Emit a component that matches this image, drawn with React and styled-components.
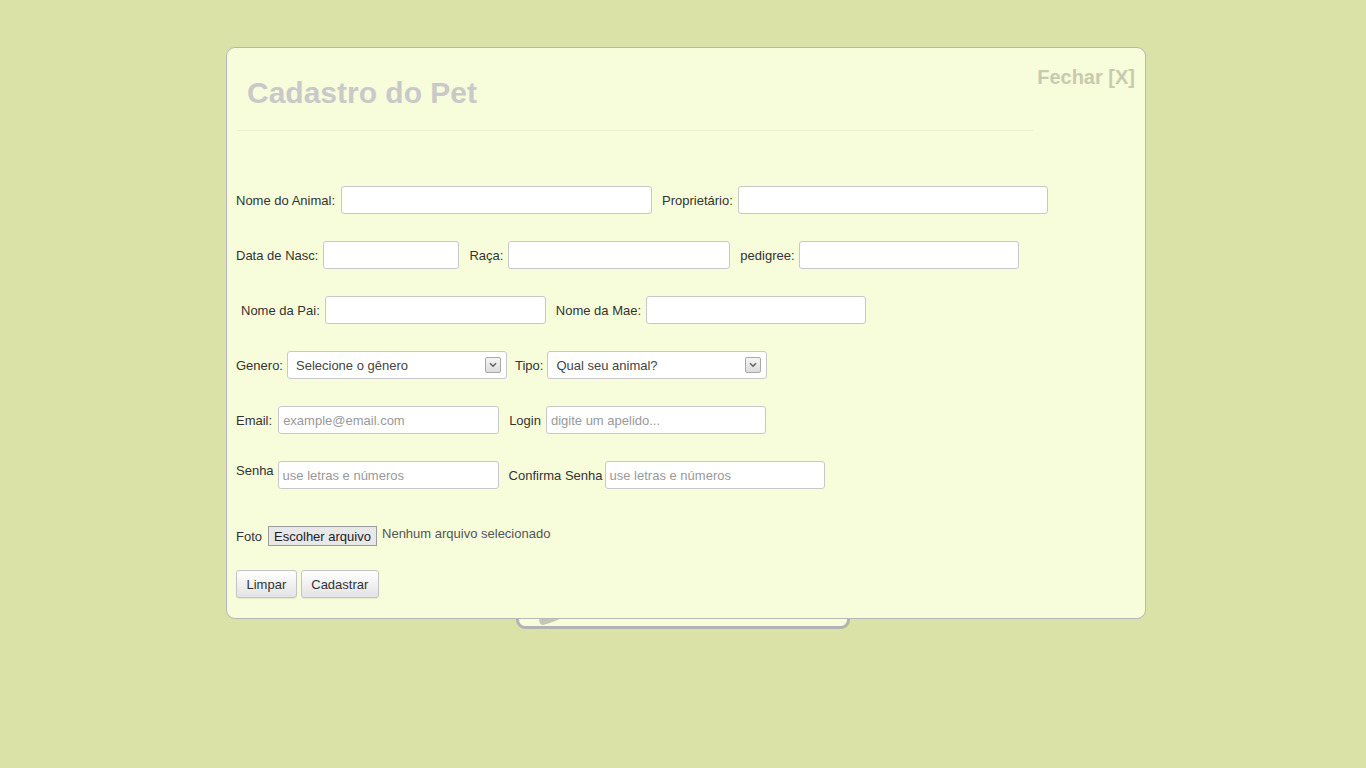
import React from 'react';
import styled, { createGlobalStyle } from 'styled-components';

const GlobalStyle = createGlobalStyle`
  html, body {
    margin: 0;
    padding: 0;
    background: #dae2a8;
    font-family: "Liberation Sans", Arial, sans-serif;
  }
  body {
    min-height: 768px;
  }
`;

const Page = styled('div')`
  position: relative;
  width: 1366px;
  height: 768px;
  overflow: hidden;
`;

const BackCard = styled('div')`
  position: relative;
  width: 328px;
  height: 294px;
  margin: 329px auto 0;
  background: #f7fcda;
  border: 3px solid #b3b3b3;
  border-radius: 9px;
`;

const Wedge = styled('svg')`
  position: absolute;
  left: 18px;
  bottom: 0;
`;

const Modal = styled('div')`
  position: absolute;
  top: 47px;
  left: 226px;
  width: 900px;
  padding: 0 9px 20px;
  background: #f7fcda;
  border: 1px solid #b7b7b7;
  border-radius: 9px;
  color: #333;
`;

const Close = styled('a')`
  position: absolute;
  top: 17px;
  right: 10px;
  font-size: 20px;
  line-height: 24px;
  font-weight: bold;
  color: #c8cab0;
  text-decoration: none;
  cursor: pointer;
`;

const Title = styled('h1')`
  margin: 27px 0 0 11px;
  font-size: 30px;
  line-height: 36px;
  font-weight: bold;
  color: #c9c9c9;
`;

const Rule = styled('hr')`
  width: 796px;
  margin: 19px 0 0 1px;
  border: 0;
  border-top: 1px solid #ecefd8;
  height: 0;
`;

const Form = styled('form')`
  display: flex;
  flex-direction: column;
  padding-top: 55px;
`;

const Row = styled('div')`
  display: flex;
  align-items: center;
  height: ${(p) => p.h || 28}px;
  margin-bottom: ${(p) => (p.mb === undefined ? 27 : p.mb)}px;
`;

const Label = styled('label')`
  font-size: 13px;
  line-height: 16px;
  color: #333;
  margin-left: ${(p) => p.indent || 0}px;
  margin-right: ${(p) => (p.gap === undefined ? 5 : p.gap)}px;
  align-self: ${(p) => (p.top ? 'flex-start' : 'center')};
  margin-top: 2px;
  white-space: nowrap;
`;

const Input = styled('input')`
  box-sizing: border-box;
  width: ${(p) => p.w}px;
  height: 28px;
  margin: 0 ${(p) => (p.after === undefined ? 10 : p.after)}px 0 0;
  padding: 0 4px;
  background: #fff;
  border: 1px solid #c8c8c8;
  border-radius: 3px;
  font-family: "Liberation Sans", Arial, sans-serif;
  font-size: 13px;
  color: #333;
  outline: none;

  &::placeholder {
    color: #999;
  }
`;

const SelectBox = styled('div')`
  position: relative;
  box-sizing: border-box;
  width: ${(p) => p.w}px;
  height: 28px;
  margin-right: ${(p) => (p.after === undefined ? 10 : p.after)}px;
  background: #fff;
  border: 1px solid #c8c8c8;
  border-radius: 3px;
`;

const Select = styled('select')`
  appearance: none;
  -webkit-appearance: none;
  width: 100%;
  height: 100%;
  padding: 0 24px 0 8px;
  border: 0;
  background: transparent;
  font-family: "Liberation Sans", Arial, sans-serif;
  font-size: 13px;
  color: #444;
  outline: none;
`;

const Arrow = styled('span')`
  position: absolute;
  top: 5px;
  right: 5px;
  box-sizing: border-box;
  width: 16px;
  height: 16px;
  display: flex;
  align-items: center;
  justify-content: center;
  border: 1px solid #a9a9a9;
  border-radius: 2px;
  background: linear-gradient(#f6f6f6, #dcdcdc);
  pointer-events: none;
`;

const FileButton = styled('button')`
  box-sizing: border-box;
  height: 20px;
  width: 109px;
  margin-right: 5px;
  padding: 0;
  border: 1px solid #9c9c9c;
  background: #e8e8e8;
  font-family: "Liberation Sans", Arial, sans-serif;
  font-size: 13px;
  color: #222;
  align-self: center;
`;

const FileStatus = styled('span')`
  font-size: 13px;
  color: #555;
  align-self: flex-start;
`;

const Button = styled('button')`
  box-sizing: border-box;
  height: 28px;
  padding: 0 9.5px;
  margin-right: 4px;
  border: 1px solid #c4c4c4;
  border-radius: 3px;
  background: linear-gradient(#ffffff, #e3e3e3);
  box-shadow: 0 1px 1px rgba(0, 0, 0, 0.08);
  font-family: "Liberation Sans", Arial, sans-serif;
  font-size: 13px;
  color: #333;
  cursor: pointer;
`;

function Chevron() {
  return (
    <svg width="8" height="6" viewBox="0 0 8 6">
      <path d="M1 1.2 L4 4.2 L7 1.2" fill="none" stroke="#666" strokeWidth="1.6" />
    </svg>
  );
}

function Dropdown({ w, after, children }) {
  return (
    <SelectBox w={w} after={after}>
      <Select defaultValue="">{children}</Select>
      <Arrow>
        <Chevron />
      </Arrow>
    </SelectBox>
  );
}

export default function App() {
  return (
    <>
      <GlobalStyle />
      <Page>
        <BackCard>
          <Wedge width="32" height="10" viewBox="0 0 32 10">
            <path d="M2 0 L30 0 C22 3 14 7 6 9 C3 9 2 6 2 0 Z" fill="#c4c7b4" />
          </Wedge>
        </BackCard>

        <Modal>
          <Close>Fechar [X]</Close>
          <Title>Cadastro do Pet</Title>
          <Rule />

          <Form onSubmit={(e) => e.preventDefault()}>
            <Row>
              <Label gap={6}>Nome do Animal:</Label>
              <Input w={311} />
              <Label>Proprietário:</Label>
              <Input w={310} />
            </Row>

            <Row>
              <Label>Data de Nasc:</Label>
              <Input w={136} />
              <Label>Raça:</Label>
              <Input w={222} />
              <Label gap={4}>pedigree:</Label>
              <Input w={220} />
            </Row>

            <Row>
              <Label indent={5}>Nome da Pai:</Label>
              <Input w={221} />
              <Label>Nome da Mae:</Label>
              <Input w={220} />
            </Row>

            <Row>
              <Label gap={4}>Genero:</Label>
              <Dropdown w={220} after={8}>
                <option value="">Selecione o gênero</option>
                <option value="m">Macho</option>
                <option value="f">Fêmea</option>
              </Dropdown>
              <Label gap={4}>Tipo:</Label>
              <Dropdown w={220}>
                <option value="">Qual seu animal?</option>
                <option value="cao">Cão</option>
                <option value="gato">Gato</option>
              </Dropdown>
            </Row>

            <Row>
              <Label gap={6}>Email:</Label>
              <Input w={221} placeholder="example@email.com" />
              <Label>Login</Label>
              <Input w={220} placeholder="digite um apelido..." />
            </Row>

            <Row mb={37}>
              <Label top gap={4}>Senha</Label>
              <Input w={221} type="text" placeholder="use letras e números" />
              <Label gap={2}>Confirma Senha</Label>
              <Input w={220} type="text" placeholder="use letras e números" />
            </Row>

            <Row h={20} mb={24}>
              <Label gap={6}>Foto</Label>
              <FileButton type="button">Escolher arquivo</FileButton>
              <FileStatus>Nenhum arquivo selecionado</FileStatus>
            </Row>

            <Row mb={0}>
              <Button type="reset">Limpar</Button>
              <Button type="submit">Cadastrar</Button>
            </Row>
          </Form>
        </Modal>
      </Page>
    </>
  );
}
